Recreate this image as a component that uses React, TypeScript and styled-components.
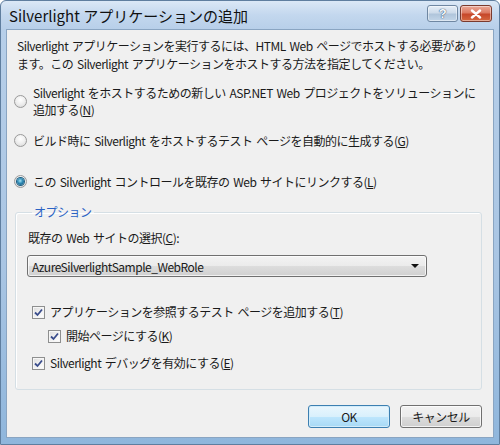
import React from 'react';
import styled, { createGlobalStyle } from 'styled-components';

const GlobalStyle = createGlobalStyle`
  html, body {
    margin: 0;
    padding: 0;
    background: #ffffff;
  }
  body {
    font-family: "Noto Sans CJK JP", "Liberation Sans", sans-serif;
    font-size: 12px;
    letter-spacing: -0.5px;
    word-spacing: 1.5px;
    color: #1a1a1a;
  }
`;

const Window = styled.div`
  width: 500px;
  height: 445px;
  box-sizing: border-box;
  display: flex;
  flex-direction: column;
  padding: 0 6px 7px;
  border: 1px solid #5f7e9f;
  border-radius: 6px 6px 0 0;
  background: linear-gradient(180deg, #dbe8f6 0px, #c3d7ee 14px, #b7cfe9 29px, #a9c5e3 60%, #8fb6dc 100%);
`;

const TitleBar = styled.div`
  height: 29px;
  display: flex;
  align-items: flex-start;
  justify-content: space-between;
`;

const Title = styled.div`
  margin: 4px 0 0 2px;
  font-size: 15px;
  letter-spacing: 0;
  word-spacing: 0;
  line-height: 21px;
  color: #101010;
  white-space: nowrap;
`;

const CaptionButtons = styled.div`
  display: flex;
  gap: 2px;
  margin: 4px 1px 0 0;
`;

const CaptionButton = styled.div<{ $close?: boolean }>`
  width: ${p => (p.$close ? 32 : 31)}px;
  height: 17px;
  box-sizing: border-box;
  display: flex;
  align-items: center;
  justify-content: center;
  border: 1px solid ${p => (p.$close ? '#7a3a2e' : '#6f87a2')};
  border-radius: 3px;
  background: ${p =>
    p.$close
      ? 'linear-gradient(180deg, #eaa999 0%, #dc7a62 45%, #c6472a 55%, #d5683f 100%)'
      : 'linear-gradient(180deg, #e6eef7 0%, #cddbea 45%, #b0c5db 55%, #c2d5e8 100%)'};
  box-shadow: inset 0 0 0 1px rgba(255, 255, 255, 0.45);
`;

const HelpMark = styled.span`
  color: #f6f9fc;
  font-family: "Liberation Sans", sans-serif;
  font-weight: bold;
  font-size: 13px;
  line-height: 13px;
  text-shadow: 0 0 1px #2f4d6e, 0 0 1px #2f4d6e;
`;

const Client = styled.div`
  flex: 1;
  display: flex;
  flex-direction: column;
  background: #f0f0f0;
  box-shadow: 0 0 0 1px #8aa5c2;
`;

const Description = styled.p`
  margin: 7px 0 0 10px;
  line-height: 18px;
  white-space: nowrap;
`;

const RadioOption = styled.div<{ $gap: number }>`
  display: flex;
  align-items: center;
  gap: 6px;
  margin: ${p => p.$gap}px 0 0 7px;
  line-height: 17px;
  white-space: nowrap;
`;

const Radio = styled.span<{ $checked?: boolean }>`
  flex: none;
  width: 13px;
  height: 13px;
  box-sizing: border-box;
  display: flex;
  align-items: center;
  justify-content: center;
  border-radius: 50%;
  border: 1px solid #9a9a9a;
  background: radial-gradient(circle at 50% 35%, #ffffff 0%, #eeeeee 50%, #d4d4d4 100%);

  &::after {
    content: '';
    display: ${p => (p.$checked ? 'block' : 'none')};
    width: 7px;
    height: 7px;
    border-radius: 50%;
    background: radial-gradient(circle at 45% 40%, #a4e3f4 0%, #2e8ab5 45%, #0d4d73 100%);
    box-shadow: 0 0 0 1px #1d5d80;
  }
`;

const Key = styled.span`
  text-decoration: underline;
`;

const Group = styled.fieldset`
  margin: 13px 11px 0 8px;
  padding: 8px 11px 17px;
  border: 1px solid #d5dfe5;
  border-radius: 3px;
  box-shadow: inset 1px 1px 0 #ffffff;
`;

const Legend = styled.legend`
  margin-left: 5px;
  padding: 0 2px;
  line-height: 18px;
  color: #2a62c4;
`;

const FieldLabel = styled.div`
  margin-left: 1px;
  line-height: 18px;
`;

const Combo = styled.div`
  margin-top: 8px;
  width: 400px;
  height: 22px;
  box-sizing: border-box;
  display: flex;
  align-items: center;
  justify-content: space-between;
  padding: 0 7px 0 4px;
  border: 1px solid #707070;
  border-radius: 3px;
  background: linear-gradient(180deg, #f3f3f3 0%, #ebebeb 50%, #dddddd 51%, #d0d0d0 100%);
  box-shadow: inset 0 0 0 1px rgba(255, 255, 255, 0.7);
`;

const ComboArrow = styled.span`
  width: 0;
  height: 0;
  border-left: 4px solid transparent;
  border-right: 4px solid transparent;
  border-top: 4px solid #111111;
`;

const CheckOption = styled.div<{ $gap: number; $indent: number }>`
  display: flex;
  align-items: center;
  gap: 5px;
  margin: ${p => p.$gap}px 0 0 ${p => p.$indent}px;
  line-height: 18px;
  white-space: nowrap;
`;

const CheckBox = styled.span`
  flex: none;
  width: 13px;
  height: 13px;
  box-sizing: border-box;
  display: flex;
  align-items: center;
  justify-content: center;
  border: 1px solid #8e8f8f;
  background: linear-gradient(135deg, #dcdcdc 0%, #f4f4f4 60%, #ffffff 100%);
  box-shadow: inset 0 0 0 1px #f6f6f6;
`;

const ButtonRow = styled.div`
  display: flex;
  justify-content: flex-end;
  gap: 10px;
  margin: 15px 11px 0 0;
`;

const PushButton = styled.div<{ $default?: boolean }>`
  width: 82px;
  height: 23px;
  box-sizing: border-box;
  display: flex;
  align-items: center;
  justify-content: center;
  border: 1px solid ${p => (p.$default ? '#3c7fb1' : '#707070')};
  border-radius: 3px;
  background: ${p =>
    p.$default
      ? 'linear-gradient(180deg, #eaf6fd 0%, #d9f0fc 50%, #bee6fd 51%, #a7d9f5 100%)'
      : 'linear-gradient(180deg, #f2f2f2 0%, #ebebeb 50%, #dddddd 51%, #cfcfcf 100%)'};
  box-shadow: inset 0 0 0 1px ${p => (p.$default ? '#d2ecfa' : 'rgba(255,255,255,0.75)')};
  color: #1a1a1a;
`;

const Check = () => (
  <svg width="9" height="9" viewBox="0 0 9 9">
    <path d="M1 4.5 L3.5 7 L8 1.5" fill="none" stroke="#3a4d8c" strokeWidth="1.8" />
  </svg>
);

const CloseGlyph = () => (
  <svg width="12" height="10" viewBox="0 0 12 10">
    <path d="M2 1.5 L10 8.5 M10 1.5 L2 8.5" stroke="#ffffff" strokeWidth="2.4" strokeLinecap="round" />
  </svg>
);

export default function App() {
  return (
    <>
      <GlobalStyle />
      <Window>
        <TitleBar>
          <Title>Silverlight アプリケーションの追加</Title>
          <CaptionButtons>
            <CaptionButton>
              <HelpMark>?</HelpMark>
            </CaptionButton>
            <CaptionButton $close>
              <CloseGlyph />
            </CaptionButton>
          </CaptionButtons>
        </TitleBar>
        <Client>
          <Description>
            Silverlight アプリケーションを実行するには、HTML Web ページでホストする必要があり
            <br />
            ます。この Silverlight アプリケーションをホストする方法を指定してください。
          </Description>

          <RadioOption $gap={11}>
            <Radio />
            <span>
              Silverlight をホストするための新しい ASP.NET Web プロジェクトをソリューションに
              <br />
              追加する(<Key>N</Key>)
            </span>
          </RadioOption>
          <RadioOption $gap={14}>
            <Radio />
            <span>
              ビルド時に Silverlight をホストするテスト ページを自動的に生成する(<Key>G</Key>)
            </span>
          </RadioOption>
          <RadioOption $gap={24}>
            <Radio $checked />
            <span>
              この Silverlight コントロールを既存の Web サイトにリンクする(<Key>L</Key>)
            </span>
          </RadioOption>

          <Group>
            <Legend>オプション</Legend>
            <FieldLabel>
              既存の Web サイトの選択(<Key>C</Key>):
            </FieldLabel>
            <Combo>
              <span>AzureSilverlightSample_WebRole</span>
              <ComboArrow />
            </Combo>
            <CheckOption $gap={26} $indent={5}>
              <CheckBox>
                <Check />
              </CheckBox>
              <span>
                アプリケーションを参照するテスト ページを追加する(<Key>T</Key>)
              </span>
            </CheckOption>
            <CheckOption $gap={6} $indent={21}>
              <CheckBox>
                <Check />
              </CheckBox>
              <span>
                開始ページにする(<Key>K</Key>)
              </span>
            </CheckOption>
            <CheckOption $gap={9} $indent={5}>
              <CheckBox>
                <Check />
              </CheckBox>
              <span>
                Silverlight デバッグを有効にする(<Key>E</Key>)
              </span>
            </CheckOption>
          </Group>

          <ButtonRow>
            <PushButton $default>OK</PushButton>
            <PushButton>キャンセル</PushButton>
          </ButtonRow>
        </Client>
      </Window>
    </>
  );
}
